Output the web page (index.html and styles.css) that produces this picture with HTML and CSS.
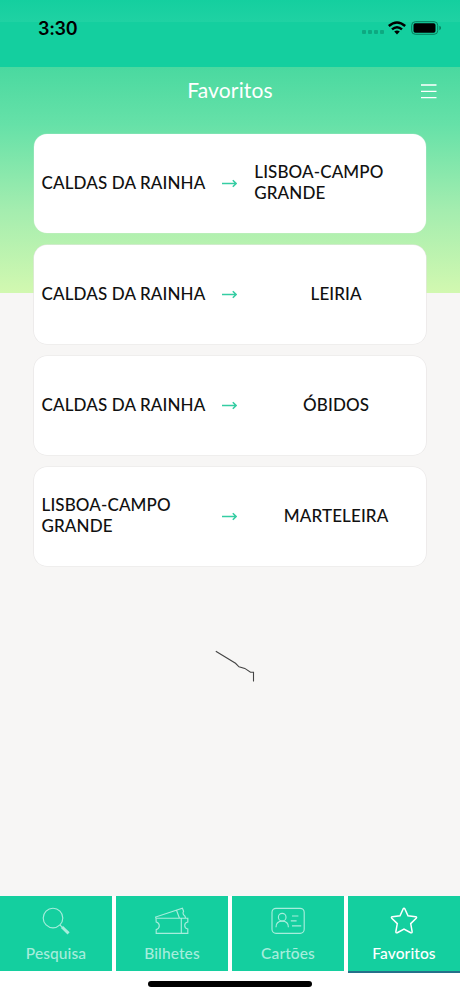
FILE: index.html
```html
<!DOCTYPE html>
<html lang="pt">
<head>
<meta charset="utf-8">
<title>Favoritos</title>
<link rel="stylesheet" href="styles.css">
</head>
<body>
<div class="app">
  <div class="status">
    <span class="time">3:30</span>
    <div class="signals">
      <span class="dots"><i></i><i></i><i></i><i></i></span>
      <svg class="wifi" width="18" height="14" viewBox="0 0 18 14"><g fill="none" stroke="#000" stroke-width="2.5"><path d="M.8 5Q9-2 17.2 5"/><path d="M4 8.4Q9 4 14 8.4"/></g><path d="M6.2 10.6Q9 8.5 11.8 10.6L9 13.5z"/></svg>
      <svg class="battery" width="31" height="14" viewBox="0 0 31 14"><rect x=".7" y=".7" width="26" height="12.6" rx="3.6" fill="none" stroke="#087c5b"/><rect x="2.5" y="2.3" width="22" height="9.4" rx="1.8"/><path d="M28.4 4.8Q30 5.4 30 7T28.4 9.2z" fill="#087c5b"/></svg>
    </div>
  </div>
  <header class="header">
    <h1>Favoritos</h1>
    <svg class="menu" width="16" height="15" viewBox="0 0 16 15"><path d="M0 1H15.5M0 7.3H15.5M0 13.6H15.5" stroke="#fff" stroke-width="1.3"/></svg>
  </header>
  <main class="list">
    <div class="card"><span class="place">CALDAS DA RAINHA</span><svg class="arrow" width="15" height="9" viewBox="0 0 15 9"><path d="M0 4.5H14M10.8 1.2L14.2 4.5L10.8 7.8"/></svg><span class="place double">LISBOA-CAMPO<br>GRANDE</span></div>
    <div class="card"><span class="place">CALDAS DA RAINHA</span><svg class="arrow" width="15" height="9" viewBox="0 0 15 9"><path d="M0 4.5H14M10.8 1.2L14.2 4.5L10.8 7.8"/></svg><span class="place short">LEIRIA</span></div>
    <div class="card"><span class="place">CALDAS DA RAINHA</span><svg class="arrow" width="15" height="9" viewBox="0 0 15 9"><path d="M0 4.5H14M10.8 1.2L14.2 4.5L10.8 7.8"/></svg><span class="place short">ÓBIDOS</span></div>
    <div class="card"><span class="place double">LISBOA-CAMPO<br>GRANDE</span><svg class="arrow" width="15" height="9" viewBox="0 0 15 9"><path d="M0 4.5H14M10.8 1.2L14.2 4.5L10.8 7.8"/></svg><span class="place short">MARTELEIRA</span></div>
  </main>
  <svg class="trace" width="40" height="32" viewBox="0 0 40 32"><path d="M.8 1.2L20.5 13.3L24 16.8L29.8 18.4L35.5 22.3H38.5V31.5" fill="none" stroke="#444" stroke-width="1.1"/></svg>
  <nav class="tabs">
    <div class="tab">
      <svg width="36" height="28" viewBox="0 0 36 28"><circle cx="15" cy="11" r="9.8"/><path d="M22 18L24.3 20.3"/><path d="M24 20L30.6 26.4" stroke-width="3"/></svg>
      <span>Pesquisa</span>
    </div>
    <div class="tab">
      <svg width="36" height="28" viewBox="0 0 36 28"><path d="M2 11.2H33.8V15Q30.7 15.6 30.7 18.5T33.8 22V26.3H2.2V22.6Q5.3 21.8 5.3 18.8T2.2 15zM27.3 11.2V26.3M2 11.2L1.6 10L28.4 1.3L29.6 4.3Q28 7 31 9.2L31.5 11M22.6 3.5L25.4 11"/></svg>
      <span>Bilhetes</span>
    </div>
    <div class="tab">
      <svg width="36" height="28" viewBox="0 0 36 28"><rect x="2" y="1.3" width="32.2" height="25" rx="4"/><circle cx="12.2" cy="10.2" r="3.8"/><path d="M6 20.2Q6 14.1 12.2 14.1T18.4 20.2M22 9H28.4M20.8 13.9H26.6M22 18.8H31.2"/></svg>
      <span>Cartões</span>
    </div>
    <div class="tab active">
      <svg width="36" height="28" viewBox="0 0 36 28"><path d="M17.1 2Q18 .6 18.9 2L22 8.7L29.6 9.7Q31.2 10 30.2 11.2L24.7 16.6L26.1 24.4Q26.3 26.3 24.7 25.7L18 22L11.3 25.7Q9.7 26.3 9.9 24.4L11.3 16.6L5.8 11.2Q4.8 10 6.4 9.7L14 8.7Z"/></svg>
      <span>Favoritos</span>
    </div>
  </nav>
  <div class="home"></div>
</div>
</body>
</html>
```
FILE: styles.css
```css
* { box-sizing: border-box; }
body { margin: 0; }
.app {
  width: 460px;
  height: 996px;
  display: flex;
  flex-direction: column;
  overflow: hidden;
  font-family: Lato, "Liberation Sans", sans-serif;
  background: linear-gradient(#4ad9a0 67px, #66e1a8 125px, #a4edaf 210px, #d2f8b0 293px, #f7f6f5 293px, #f7f6f5 896px, #fff 896px);
}
.status {
  height: 67px;
  flex: none;
  padding: 18px 18px 0 38px;
  display: flex;
  justify-content: space-between;
  align-items: flex-start;
  background: linear-gradient(#14cf9f, #1fd2a3 22px, #14cf9f 22px);
}
.time { font: 600 18px/21px Inter, sans-serif; letter-spacing: -.3px; }
.signals { display: flex; align-items: flex-start; padding-top: 3px; }
.dots { display: flex; gap: 2px; padding-top: 9px; margin-right: 4px; }
.dots i { width: 4px; height: 4px; border-radius: 1px; background: #0da981; }
.battery { margin-left: 5px; }
.header {
  height: 67px;
  flex: none;
  display: grid;
  grid-template-columns: 1fr auto 1fr;
  padding: 10px 23px 0;
}
.header h1 {
  grid-column: 2;
  margin: 0;
  color: #fff;
  font-size: 21px;
  line-height: 26px;
  font-weight: 400;
  letter-spacing: .15px;
}
.menu { justify-self: end; margin-top: 7px; }
.list { padding: 0 34px; display: grid; gap: 12px; flex: none; }
.card {
  height: 99px;
  padding: 0 8px 2px 7.5px;
  display: grid;
  grid-template-columns: minmax(0, 1fr) 49px minmax(0, 1fr);
  align-items: center;
  background: #fff;
  border-radius: 13px;
  box-shadow: 0 0 0 .6px #e7e5e5;
}
.card:first-child { box-shadow: 0 0 0 .6px rgba(234, 232, 232, .3); }
.place {
  color: #111;
  font-size: 17px;
  line-height: 21px;
  font-weight: 500;
  letter-spacing: .12px;
  white-space: nowrap;
}
.double { padding-bottom: 2px; }
.short { text-align: center; }
.arrow { justify-self: center; margin-top: 1px; fill: none; stroke: #35cda3; stroke-width: 1.6; }
.trace { margin: 84px 0 0 215px; flex: none; }
.tabs {
  margin-top: auto;
  flex: none;
  height: 77px;
  display: grid;
  grid-template-columns: repeat(4, 1fr);
  gap: 4px;
}
.tab {
  height: 75px;
  display: flex;
  flex-direction: column;
  align-items: center;
  padding-top: 11px;
  background: #14cf9f;
  color: #a6eddc;
}
.tab svg { fill: none; stroke: currentColor; stroke-width: 1.15; }
.tab span { margin-top: 8px; font-size: 15.5px; line-height: 20px; letter-spacing: .1px; font-weight: 500; }
.active { height: 77px; border-bottom: 2px solid #26708a; color: #fff; }
.active svg { stroke-width: 1.5; }
.home { width: 164px; height: 6px; margin: 8px auto 9px; flex: none; border-radius: 3px; background: #000; }
```
